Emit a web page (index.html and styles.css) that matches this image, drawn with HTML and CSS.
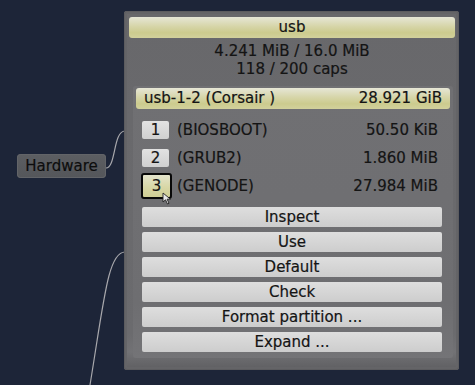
FILE: index.html
```html
<!DOCTYPE html>
<html>
<head>
<meta charset="utf-8">
<link rel="stylesheet" href="styles.css">
</head>
<body>
<div class="canvas">
  <svg class="wires" width="475" height="385" viewBox="0 0 475 385">
    <path d="M106,168 C116,168 113,131 125,131" />
    <path d="M90,385 C104,300 108,252 125,252" />
  </svg>
  <div class="node hw">Hardware</div>
  <div class="node panel">
    <div class="title">usb</div>
    <div class="stats">
      <div>4.241 MiB / 16.0 MiB</div>
      <div>118 / 200 caps</div>
    </div>
    <div class="section">
      <div class="hdr"><span>usb-1-2 (Corsair )</span><span>28.921 GiB</span></div>
      <div class="rows">
        <div class="row"><span class="num">1</span><span class="lbl">(BIOSBOOT)</span><span class="size">50.50 KiB</span></div>
        <div class="row"><span class="num">2</span><span class="lbl">(GRUB2)</span><span class="size">1.860 MiB</span></div>
        <div class="row"><span class="num sel">3</span><span class="lbl">(GENODE)</span><span class="size">27.984 MiB</span></div>
      </div>
      <div class="actions">
        <div class="btn">Inspect</div>
        <div class="btn">Use</div>
        <div class="btn">Default</div>
        <div class="btn">Check</div>
        <div class="btn">Format partition ...</div>
        <div class="btn">Expand ...</div>
      </div>
    </div>
  </div>
  <svg class="cursor" width="12" height="14" viewBox="0 0 12 14">
    <path d="M1,1 L1,10 L3.5,7.8 L5.5,12 L7,11.3 L5.1,7.2 L8.5,7.2 Z" fill="#e8e8e8" stroke="#222" stroke-width="0.9"/>
  </svg>
</div>
</body>
</html>
```

FILE: styles.css
```css
html, body {
  margin: 0;
  padding: 0;
}
body {
  background: #1d2538;
  font-family: "DejaVu Sans", "Liberation Sans", sans-serif;
  font-size: 15px;
  color: #141414;
  -webkit-text-stroke: 0.2px #141414;
}
.canvas {
  position: relative;
  width: 475px;
  height: 385px;
  overflow: hidden;
  background: #1d2538;
}
.wires {
  position: absolute;
  left: 0;
  top: 0;
}
.wires path {
  fill: none;
  stroke: #a8a8ac;
  stroke-width: 1.2;
}
.node {
  position: absolute;
}
.hw {
  left: 17px;
  top: 154px;
  width: 89px;
  height: 24px;
  box-sizing: border-box;
  background: linear-gradient(#5c5e62, #54565a);
  border-radius: 4px;
  box-shadow: inset 0 0 0 1px #626468;
  line-height: 24px;
  text-align: center;
  color: #0c0c0c;
}
.panel {
  left: 124px;
  top: 11px;
  width: 335px;
  height: 359px;
  box-sizing: border-box;
  padding: 6px 4px 0 5px;
  border-radius: 3px;
  background: linear-gradient(#68686b 0%, #6b6b6e 90%, #727275 95%, #5e5e61 100%);
  box-shadow: inset 0 0 0 1px #5c5c5f, inset 0 0 0 3px #646467;
}
.title {
  height: 21px;
  line-height: 21px;
  text-align: center;
  border-radius: 3px;
  background: linear-gradient(#e6e6d6 0%, #d6d5a8 45%, #cccb8e 75%, #d2d19c 100%);
}
.stats {
  margin-top: 4px;
  text-align: center;
  line-height: 18px;
}
.section {
  margin-top: 8px;
  margin-left: 4px;
  width: 320px;
  height: 272px;
  box-sizing: border-box;
  padding: 2px 3px 0 3px;
  border-radius: 3px;
  background: linear-gradient(#707073, #6e6e71 80%, #747477);
}
.hdr {
  height: 21px;
  line-height: 21px;
  display: flex;
  justify-content: space-between;
  padding: 0 8px;
  border-radius: 3px;
  background: linear-gradient(#e6e6d6 0%, #d6d5a8 45%, #cccb8e 75%, #d2d19c 100%);
}
.rows {
  margin-top: 7px;
}
.row {
  height: 28px;
  display: flex;
  align-items: center;
  padding: 0 12px 0 6px;
}
.num {
  width: 27px;
  height: 18px;
  box-sizing: border-box;
  line-height: 18px;
  text-align: center;
  margin-right: 8px;
  border-radius: 2px;
  background: linear-gradient(#e2e2e2, #d0d0d0);
}
.num.sel {
  width: 31px;
  height: 26px;
  line-height: 22px;
  margin-left: -1px;
  margin-right: 5px;
  border: 2px solid #080808;
  border-radius: 3px;
  background: linear-gradient(#e4e4cc 0%, #d8d7a6 55%, #cfce94 100%);
}
.lbl {
  flex: 1;
}
.size {
  text-align: right;
}
.actions {
  margin-top: 7px;
  margin-left: 6px;
  width: 300px;
  display: flex;
  flex-direction: column;
  gap: 5px;
}
.btn {
  height: 20px;
  line-height: 20px;
  text-align: center;
  border-radius: 2px;
  background: linear-gradient(#dedede, #cdcdcd);
}
.cursor {
  position: absolute;
  left: 162px;
  top: 192px;
}
```
